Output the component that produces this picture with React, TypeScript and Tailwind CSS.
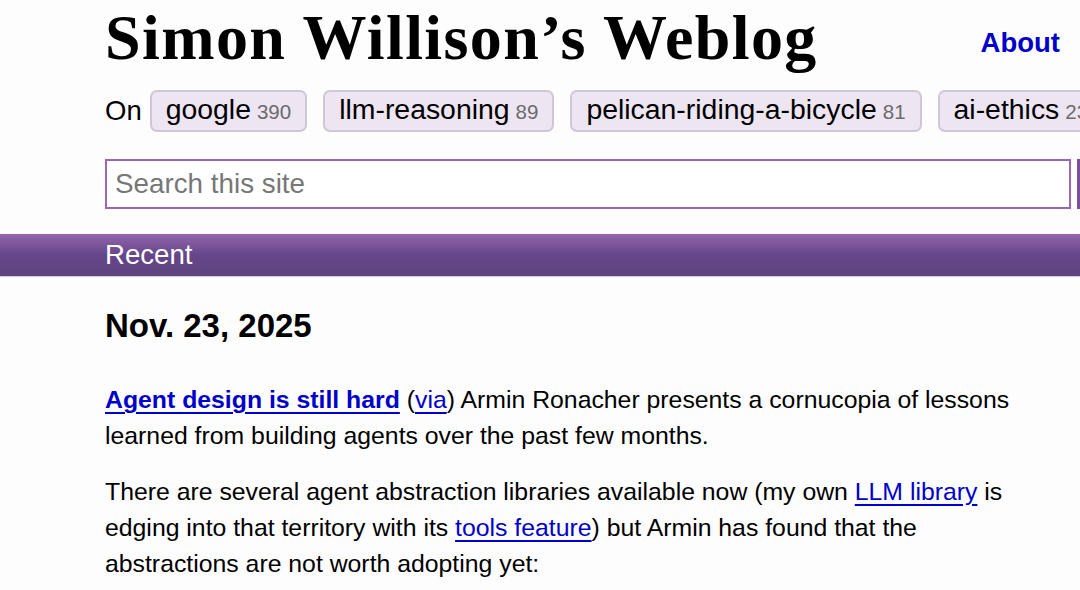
import React from 'react'

const tags = [
  { name: 'google', count: 390 },
  { name: 'llm-reasoning', count: 89 },
  { name: 'pelican-riding-a-bicycle', count: 81 },
  { name: 'ai-ethics', count: 234 },
]

const Tag: React.FC<{ name: string; count: number }> = ({ name, count }) => (
  <a className="shrink-0 flex items-baseline gap-[6px] h-[42px] px-[14px] pt-0 leading-[34px] rounded-[7px] border-2 border-[#cfc7d6] bg-[#ede5f2] text-[28.4px] text-black whitespace-nowrap">
    {name}
    <span className="text-[20.5px] text-[#6b6b6b]">{count}</span>
  </a>
)

export default function App() {
  return (
    <div className="w-[1080px] h-[590px] overflow-hidden bg-[#fdfdfd] text-black font-['Liberation_Sans',Arial,sans-serif]">
      {/* header */}
      <div className="flex items-start justify-between pl-[105px] pr-[20px] pt-[3px] h-[82px]">
        <h1 className="font-['Liberation_Serif','Times_New_Roman',serif] font-bold text-[64px] leading-[70px] tracking-[1.4px] whitespace-nowrap">
          Simon Willison’s Weblog
        </h1>
        <a className="mt-[19px] text-[27.5px] font-bold text-[#0000cc]">About</a>
      </div>

      {/* tags */}
      <div className="flex items-center gap-[16px] pl-[105px] h-[44px] mt-[7px] w-[1400px]">
        <span className="text-[27.5px] -mr-[8px]">On</span>
        {tags.map((t) => (
          <Tag key={t.name} {...t} />
        ))}
      </div>

      {/* search */}
      <div className="flex items-center gap-[6px] pl-[105px] mt-[26px] w-[1400px]">
        <div className="w-[966px] h-[50px] border-2 border-[#9a67b6] bg-white flex items-center px-[8px] text-[27.8px] text-[#777777]">
          Search this site
        </div>
        <div className="w-[60px] h-[50px] bg-[#7a4f9c]" />
      </div>

      {/* recent bar */}
      <div className="mt-[25px] h-[43px] bg-gradient-to-b from-[#9466ad] via-[#65468a] to-[#5f447f] flex items-center pl-[105px] border-b border-[#d8cbe0]">
        <span className="text-white text-[27.6px]">Recent</span>
      </div>

      {/* content */}
      <div className="pl-[105px] pr-[50px]">
        <h3 className="mt-[30px] text-[33px] font-bold leading-[38px]">Nov. 23, 2025</h3>
        <p className="mt-[37px] text-[24.8px] leading-[36px]">
          <a className="font-bold text-[#0000cc] underline underline-offset-[4px] decoration-2">Agent design is still hard</a>{' '}
          (<a className="text-[#0000cc] underline underline-offset-[4px]">via</a>) Armin Ronacher presents a cornucopia of lessons learned from building agents over the past few months.
        </p>
        <p className="mt-[20px] text-[24.8px] leading-[36px]">
          There are several agent abstraction libraries available now (my own{' '}
          <a className="text-[#0000cc] underline underline-offset-[4px]">LLM library</a> is edging into that territory with its{' '}
          <a className="text-[#0000cc] underline underline-offset-[4px]">tools feature</a>) but Armin has found that the abstractions are not worth adopting yet:
        </p>
      </div>
    </div>
  )
}
